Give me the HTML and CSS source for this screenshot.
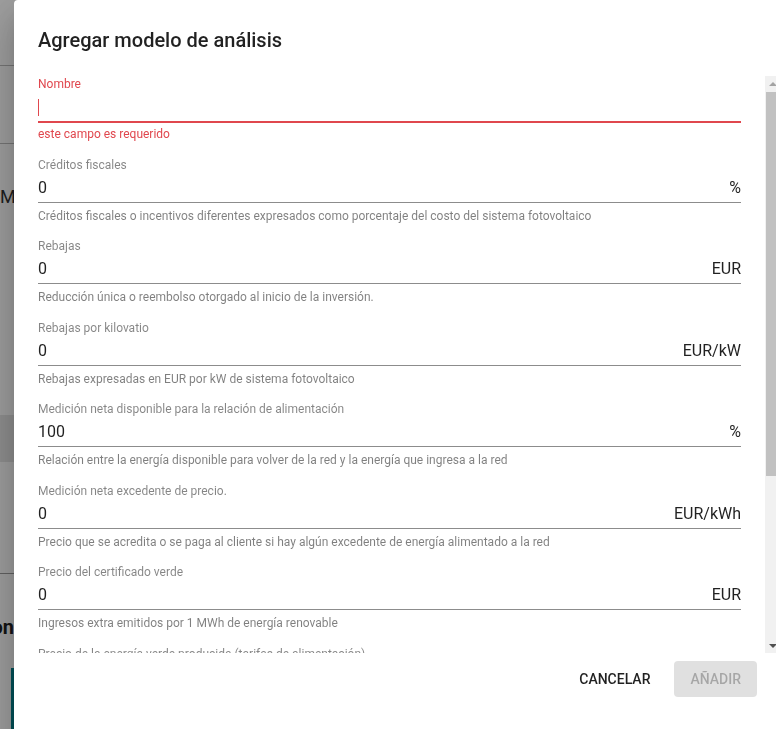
FILE: index.html
```html
<!DOCTYPE html>
<html>
  <head>
    <title>Agregar modelo de análisis</title>
    <link rel="stylesheet" href="styles.css">
  </head>
  <body>
    <div class="page">
      <div class="page-header"></div>
      <div class="page-tabs"></div>
      <div class="page-title">Modelos de análisis</div>
      <div class="page-band"></div>
      <div class="page-rule"></div>
      <h2 class="page-heading">Modelos de análisis que se crearon</h2>
      <div class="page-card"></div>
    </div>

    <div class="backdrop"></div>

    <div class="dialog">
      <h1 class="dialog-title">Agregar modelo de análisis</h1>

      <div class="dialog-body">
        <form class="dialog-content">
          <div class="field field-invalid">
            <label class="field-label">Nombre</label>
            <div class="field-row">
              <span class="caret"></span>
              <input class="field-input" type="text">
            </div>
            <div class="field-hint">este campo es requerido</div>
          </div>

          <div class="field">
            <label class="field-label">Créditos fiscales</label>
            <div class="field-row">
              <input class="field-input" type="text" value="0">
              <span class="field-suffix">%</span>
            </div>
            <div class="field-hint">Créditos fiscales o incentivos diferentes expresados como porcentaje del costo del sistema fotovoltaico</div>
          </div>

          <div class="field">
            <label class="field-label">Rebajas</label>
            <div class="field-row">
              <input class="field-input" type="text" value="0">
              <span class="field-suffix">EUR</span>
            </div>
            <div class="field-hint">Reducción única o reembolso otorgado al inicio de la inversión.</div>
          </div>

          <div class="field">
            <label class="field-label">Rebajas por kilovatio</label>
            <div class="field-row">
              <input class="field-input" type="text" value="0">
              <span class="field-suffix">EUR/kW</span>
            </div>
            <div class="field-hint">Rebajas expresadas en EUR por kW de sistema fotovoltaico</div>
          </div>

          <div class="field">
            <label class="field-label">Medición neta disponible para la relación de alimentación</label>
            <div class="field-row">
              <input class="field-input" type="text" value="100">
              <span class="field-suffix">%</span>
            </div>
            <div class="field-hint">Relación entre la energía disponible para volver de la red y la energía que ingresa a la red</div>
          </div>

          <div class="field">
            <label class="field-label">Medición neta excedente de precio.</label>
            <div class="field-row">
              <input class="field-input" type="text" value="0">
              <span class="field-suffix">EUR/kWh</span>
            </div>
            <div class="field-hint">Precio que se acredita o se paga al cliente si hay algún excedente de energía alimentado a la red</div>
          </div>

          <div class="field">
            <label class="field-label">Precio del certificado verde</label>
            <div class="field-row">
              <input class="field-input" type="text" value="0">
              <span class="field-suffix">EUR</span>
            </div>
            <div class="field-hint">Ingresos extra emitidos por 1 MWh de energía renovable</div>
          </div>

          <div class="field">
            <label class="field-label">Precio de la energía verde producida (tarifas de alimentación)</label>
            <div class="field-row">
              <input class="field-input" type="text" value="0">
              <span class="field-suffix">EUR/kWh</span>
            </div>
            <div class="field-hint">Precio pagado por cada kWh de energía verde producida</div>
          </div>
        </form>

        <div class="scrollbar">
          <div class="scroll-btn"><span class="arrow-up"></span></div>
          <div class="scroll-track">
            <div class="scroll-thumb"></div>
          </div>
          <div class="scroll-btn"><span class="arrow-down"></span></div>
        </div>
      </div>

      <div class="dialog-actions">
        <button class="btn btn-flat" type="button">CANCELAR</button>
        <button class="btn btn-raised" type="button" disabled>AÑADIR</button>
      </div>
    </div>
  </body>
</html>
```

FILE: styles.css
```css
html, body {
  margin: 0;
  height: 100%;
  overflow: hidden;
}

body {
  font-family: Roboto, "Helvetica Neue", sans-serif;
  background-color: #fff;
  color: rgba(0, 0, 0, 0.87);
}

/* page behind the dialog */
.page-header {
  height: 65px;
  border-bottom: 1px solid #bdbdbd;
}

.page-tabs {
  height: 77px;
  border-bottom: 1px solid #bdbdbd;
}

.page-title {
  margin-top: 42px;
  font-size: 18px;
  line-height: 22px;
  color: #333;
  white-space: nowrap;
}

.page-band {
  margin-top: 207px;
  height: 47px;
  background-color: #e6e6e6;
}

.page-rule {
  margin-top: 111px;
  border-top: 1px solid #9e9e9e;
}

.page-heading {
  width: 14px;
  margin: 40px 0 0;
  font-size: 20px;
  line-height: 26px;
  font-weight: 700;
  color: #212121;
  direction: rtl;
  white-space: nowrap;
}

.page-card {
  margin: 28px 0 0 11px;
  height: 120px;
  border-left: 3px solid #00838f;
}

.backdrop {
  position: fixed;
  inset: 0;
  background-color: rgba(0, 0, 0, 0.38);
}

/* dialog */
.dialog {
  position: fixed;
  top: 0;
  left: 14px;
  width: 766px;
  min-height: 760px;
  box-sizing: border-box;
  padding: 24px;
  background-color: #fff;
  border-radius: 4px;
  box-shadow: 0 11px 15px -7px rgba(0, 0, 0, 0.2),
    0 24px 38px 3px rgba(0, 0, 0, 0.14),
    0 9px 46px 8px rgba(0, 0, 0, 0.12);
}

.dialog-title {
  margin: 0 0 20px;
  font-size: 20px;
  line-height: 32px;
  font-weight: 500;
  color: rgba(0, 0, 0, 0.87);
}

.dialog-body {
  display: flex;
  height: 577px;
  margin: 0 -24px;
}

.dialog-content {
  flex: 1;
  min-width: 0;
  padding: 1px 24px 0;
  overflow: hidden;
}

/* scrollbar of the content area */
.scrollbar {
  display: flex;
  flex-direction: column;
  width: 15px;
  background-color: #f1f1f1;
}

.scroll-btn {
  display: flex;
  justify-content: center;
  align-items: center;
  height: 15px;
}

.arrow-up {
  border-left: 4px solid transparent;
  border-right: 4px solid transparent;
  border-bottom: 4px solid #a3a3a3;
}

.arrow-down {
  border-left: 4px solid transparent;
  border-right: 4px solid transparent;
  border-top: 4px solid #505050;
}

.scroll-track {
  flex: 1;
  padding-top: 1px;
}

.scroll-thumb {
  height: 384px;
  margin-left: 1px;
  background-color: #c1c1c1;
}

.field {
  margin-bottom: 16.5px;
}

.field-label {
  display: block;
  font-size: 12px;
  line-height: 14px;
  color: rgba(0, 0, 0, 0.48);
}

.field-row {
  display: flex;
  align-items: center;
  margin-top: 7px;
  padding-bottom: 5px;
  border-bottom: 1px solid rgba(0, 0, 0, 0.45);
}

.field-input {
  flex: 1;
  min-width: 0;
  height: 18px;
  padding: 0;
  border: none;
  outline: none;
  background: transparent;
  font: inherit;
  font-size: 16px;
  line-height: 18px;
  color: rgba(0, 0, 0, 0.87);
}

.field-suffix {
  font-size: 16px;
  line-height: 18px;
  color: rgba(0, 0, 0, 0.87);
}

.field-hint {
  margin-top: 6px;
  font-size: 12px;
  line-height: 14px;
  color: rgba(0, 0, 0, 0.5);
  white-space: nowrap;
}

.field-invalid .field-label,
.field-invalid .field-hint {
  color: #e0474e;
}

.field-invalid .field-row {
  border-bottom: 2px solid #e0474e;
}

.field-invalid .field-hint {
  margin-top: 4px;
}

.caret {
  width: 1px;
  height: 17px;
  margin-right: -1px;
  background-color: #e0474e;
}

.dialog-actions {
  display: flex;
  justify-content: flex-end;
  align-items: center;
  gap: 8px;
  min-height: 52px;
  padding: 8px 0;
  box-sizing: border-box;
  margin-right: -1px;
}

.btn {
  height: 36px;
  padding: 0 16px;
  border: none;
  border-radius: 4px;
  font-family: Roboto, "Helvetica Neue", sans-serif;
  font-size: 14px;
  font-weight: 500;
  line-height: 36px;
  background: transparent;
  cursor: pointer;
}

.btn-flat {
  color: rgba(0, 0, 0, 0.87);
}

.btn-raised {
  background-color: rgba(0, 0, 0, 0.12);
  color: rgba(0, 0, 0, 0.26);
  cursor: default;
}
```
